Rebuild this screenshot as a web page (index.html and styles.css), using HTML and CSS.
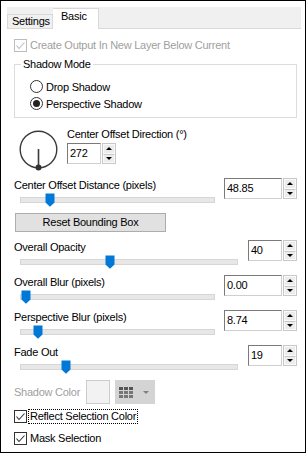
FILE: index.html
```html
<!DOCTYPE html>
<html>
<head>
    <meta charset="utf-8">
    <title>Shadow</title>
    <link rel="stylesheet" href="styles.css">
</head>
<body>
<div class="window">
    <div class="tabstrip">
        <div class="tab">Settings</div>
        <div class="tab active">Basic</div>
    </div>
    <div class="panel">
        <div class="check disabled">
            <span class="box"><svg width="11" height="11" viewBox="0 0 11 11"><polyline points="1.5,5.5 4,8.5 9.5,2.5"/></svg></span>
            <span class="text">Create Output In New Layer Below Current</span>
        </div>

        <fieldset class="group">
            <legend>Shadow Mode</legend>
            <div class="radio"><span class="dot"></span>Drop Shadow</div>
            <div class="radio on"><span class="dot"></span>Perspective Shadow</div>
        </fieldset>

        <div class="dial-row">
            <svg class="dial" width="42" height="42" viewBox="0 0 42 42">
                <circle cx="20.5" cy="20.5" r="18.3"/>
                <line x1="20.5" y1="20" x2="20.5" y2="38"/>
                <circle class="knob" cx="20.5" cy="38.5" r="3"/>
            </svg>
            <div class="dial-side">
                <div class="lbl">Center Offset Direction (°)</div>
                <div class="spin">
                    <span class="val w33">272</span>
                    <span class="arrows"><i class="up"></i><i class="down"></i></span>
                </div>
            </div>
        </div>

        <div class="slider-row">
            <div class="slider-col">
                <div class="lbl">Center Offset Distance (pixels)</div>
                <div class="track short"><svg class="thumb" style="left:25px" width="10" height="14" viewBox="0 0 10 14"><path d="M0.5 0.5H9.5V9.5L5 13.8L0.5 9.5Z"/></svg></div>
            </div>
            <div class="spin">
                <span class="val w58">48.85</span>
                <span class="arrows"><i class="up"></i><i class="down"></i></span>
            </div>
        </div>

        <button class="reset" type="button">Reset Bounding Box</button>

        <div class="slider-row first">
            <div class="slider-col">
                <div class="lbl">Overall Opacity</div>
                <div class="track long"><svg class="thumb" style="left:85px" width="10" height="14" viewBox="0 0 10 14"><path d="M0.5 0.5H9.5V9.5L5 13.8L0.5 9.5Z"/></svg></div>
            </div>
            <div class="spin">
                <span class="val w34">40</span>
                <span class="arrows"><i class="up"></i><i class="down"></i></span>
            </div>
        </div>

        <div class="slider-row">
            <div class="slider-col">
                <div class="lbl">Overall Blur (pixels)</div>
                <div class="track short"><svg class="thumb" style="left:1px" width="10" height="14" viewBox="0 0 10 14"><path d="M0.5 0.5H9.5V9.5L5 13.8L0.5 9.5Z"/></svg></div>
            </div>
            <div class="spin">
                <span class="val w58">0.00</span>
                <span class="arrows"><i class="up"></i><i class="down"></i></span>
            </div>
        </div>

        <div class="slider-row">
            <div class="slider-col">
                <div class="lbl">Perspective Blur (pixels)</div>
                <div class="track short"><svg class="thumb" style="left:13px" width="10" height="14" viewBox="0 0 10 14"><path d="M0.5 0.5H9.5V9.5L5 13.8L0.5 9.5Z"/></svg></div>
            </div>
            <div class="spin">
                <span class="val w58">8.74</span>
                <span class="arrows"><i class="up"></i><i class="down"></i></span>
            </div>
        </div>

        <div class="slider-row">
            <div class="slider-col">
                <div class="lbl">Fade Out</div>
                <div class="track long"><svg class="thumb" style="left:41px" width="10" height="14" viewBox="0 0 10 14"><path d="M0.5 0.5H9.5V9.5L5 13.8L0.5 9.5Z"/></svg></div>
            </div>
            <div class="spin">
                <span class="val w34">19</span>
                <span class="arrows"><i class="up"></i><i class="down"></i></span>
            </div>
        </div>

        <div class="color-row">
            <span class="color-lbl">Shadow Color</span>
            <span class="swatch"></span>
            <span class="palette">
                <svg width="16" height="11" viewBox="0 0 16 11">
                    <rect x="0" y="0" width="4" height="3" fill="#555"/>
                    <rect x="5" y="0" width="4" height="3" fill="#555"/>
                    <rect x="10" y="0" width="4" height="3" fill="#555"/>
                    <rect x="0" y="4" width="4" height="3" fill="#777"/>
                    <rect x="5" y="4" width="4" height="3" fill="#777"/>
                    <rect x="10" y="4" width="4" height="3" fill="#777"/>
                    <rect x="0" y="8" width="4" height="3" fill="#777"/>
                    <rect x="5" y="8" width="4" height="3" fill="#777"/>
                    <rect x="10" y="8" width="4" height="3" fill="#777"/>
                </svg>
                <span class="caret"></span>
            </span>
        </div>

        <div class="check row">
            <span class="box"><svg width="11" height="11" viewBox="0 0 11 11"><polyline points="1.5,5.5 4,8.5 9.5,2.5"/></svg></span>
            <span class="text focus">Reflect Selection Color</span>
        </div>
        <div class="check row">
            <span class="box"><svg width="11" height="11" viewBox="0 0 11 11"><polyline points="1.5,5.5 4,8.5 9.5,2.5"/></svg></span>
            <span class="text">Mask Selection</span>
        </div>
    </div>
</div>
</body>
</html>
```

FILE: styles.css
```css
* {
    box-sizing: border-box;
}

body {
    margin: 0;
    background: #fff;
    color: #000;
    font-family: "Liberation Sans", Arial, sans-serif;
    font-size: 11px;
    letter-spacing: -0.25px;
}

.window {
    width: 306px;
    height: 453px;
    border: 1px solid #000;
    background: #fff;
    overflow: hidden;
}

/* tabs */
.tabstrip {
    display: flex;
    align-items: flex-end;
    width: 294px;
    height: 22px;
    margin: 6px 0 0 6px;
    background: #f0f0f0;
    border-bottom: 1px solid #d9d9d9;
}

.tab {
    width: 46px;
    height: 14px;
    padding-left: 4px;
    line-height: 13px;
    border: 1px solid #d9d9d9;
    border-bottom: none;
    background: #f0f0f0;
}

.tab.active {
    height: 21px;
    margin-bottom: -1px;
    padding-left: 8px;
    line-height: 15px;
    background: #fff;
    border-left: none;
}

.panel {
    padding: 0 8px 0 13px;
}

/* checkboxes */
.check {
    display: flex;
    align-items: center;
    height: 13px;
    margin-top: 10px;
    line-height: 13px;
}

.check .box {
    display: flex;
    width: 13px;
    height: 13px;
    margin-right: 3px;
    border: 1px solid #333;
    background: #fff;
}

.check polyline {
    fill: none;
    stroke: #333;
    stroke-width: 1.1;
}

.check.disabled {
    color: #a0a0a0;
}

.check.disabled .box {
    border-color: #bcbcbc;
}

.check.disabled polyline {
    stroke: #bcbcbc;
}

.check.row {
    height: 20px;
    margin-top: 2px;
}

.check .focus {
    margin-left: -1px;
    padding: 0 1px;
    outline: 1px dotted #000;
}

/* group box */
.group {
    width: 283px;
    margin: 5px 0 0 0;
    padding: 7px 0 5px 15px;
    border: 1px solid #dcdcdc;
    min-width: 0;
}

.group legend {
    margin-left: -9px;
    padding: 0 2px;
    line-height: 14px;
}

.radio {
    display: flex;
    align-items: center;
    height: 17px;
}

.radio .dot {
    display: flex;
    align-items: center;
    justify-content: center;
    width: 13px;
    height: 13px;
    margin-right: 3px;
    border: 1px solid #333;
    border-radius: 50%;
    background: #fff;
}

.radio.on .dot::after {
    content: "";
    width: 7px;
    height: 7px;
    border-radius: 50%;
    background: #222;
}

/* direction dial */
.dial-row {
    display: flex;
    align-items: flex-start;
    margin-top: 9px;
}

.dial {
    margin: 2px 7px 0 4px;
}

.dial circle {
    fill: none;
    stroke: #3a3a3a;
    stroke-width: 1.4;
}

.dial line {
    stroke: #3a3a3a;
    stroke-width: 1.6;
}

.dial .knob {
    fill: #333;
    stroke: none;
}

.dial-side .spin {
    margin-top: 2px;
}

.lbl {
    line-height: 14px;
    white-space: nowrap;
}

/* spin boxes */
.spin {
    display: flex;
    gap: 1px;
    height: 21px;
}

.spin .val {
    height: 21px;
    padding-left: 2px;
    line-height: 19px;
    border: 1px solid;
    border-color: #7a7a7a #cfcfcf #cfcfcf #7a7a7a;
    background: #fff;
}

.w33 { width: 34px; }
.w34 { width: 34px; }
.w58 { width: 58px; }

.arrows {
    display: flex;
    flex-direction: column;
    width: 14px;
    height: 21px;
    border: 1px solid #c8c8c8;
}

.arrows i {
    flex: 1;
    display: flex;
    align-items: center;
    justify-content: center;
    background: #ececec;
    border: 1px solid #fafafa;
}

.arrows i + i {
    border-top-color: #c8c8c8;
}

.arrows .up::after {
    content: "";
    border-left: 3px solid transparent;
    border-right: 3px solid transparent;
    border-bottom: 3px solid #000;
}

.arrows .down::after {
    content: "";
    border-left: 3px solid transparent;
    border-right: 3px solid transparent;
    border-top: 3px solid #000;
}

/* sliders */
.slider-row {
    display: flex;
    justify-content: space-between;
    align-items: flex-start;
    height: 28px;
    margin-top: 7px;
}

.slider-row.first {
    margin-top: 8px;
}

.slider-row .slider-col {
    flex: 1;
}

.track {
    position: relative;
    height: 14px;
    margin-left: 6px;
}

.track::before {
    content: "";
    position: absolute;
    left: 0;
    right: 0;
    top: 5px;
    height: 4px;
    background: #e7e7e7;
    border: 1px solid #d6d6d6;
}

.track.short { width: 195px; }
.track.long { width: 218px; }

.thumb {
    position: absolute;
    top: 1px;
}

.thumb path {
    fill: #0078d7;
}

/* button */
.reset {
    display: block;
    width: 151px;
    height: 19px;
    margin: 7px 0 0 1px;
    padding: 0;
    border: 1px solid #adadad;
    background: #e1e1e1;
    font-family: inherit;
    font-size: 11px;
    letter-spacing: -0.25px;
    line-height: 17px;
    color: #000;
}

/* shadow color */
.color-row {
    display: flex;
    align-items: center;
    height: 24px;
    margin-top: 7px;
}

.color-lbl {
    width: 72px;
    color: #a0a0a0;
}

.swatch {
    width: 24px;
    height: 24px;
    border: 1px solid #cccccc;
    background: #f2f2f2;
}

.palette {
    display: flex;
    align-items: center;
    width: 40px;
    height: 24px;
    margin-left: 5px;
    padding-left: 4px;
    background: #d4d4d4;
}

.palette .caret {
    margin-left: 8px;
    border-left: 3px solid transparent;
    border-right: 3px solid transparent;
    border-top: 3px solid #808080;
}
```
